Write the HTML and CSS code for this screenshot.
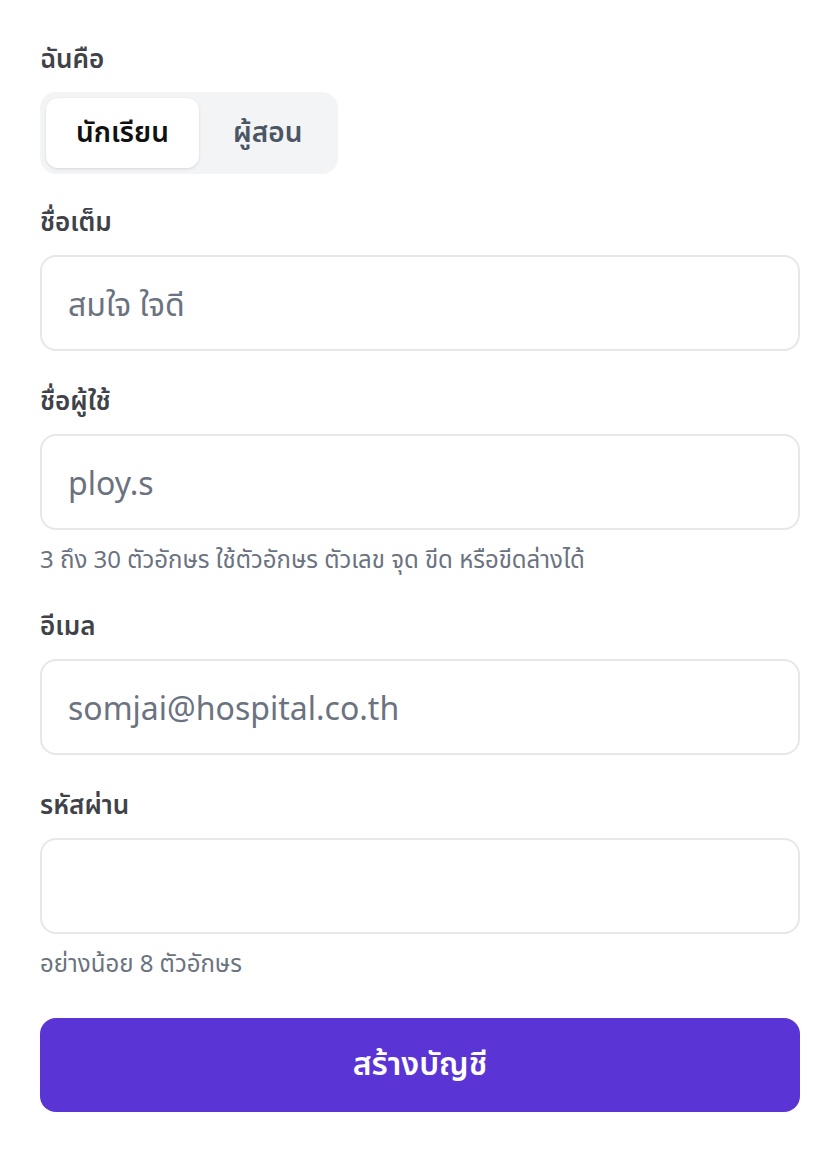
FILE: index.html
```html
<!DOCTYPE html>
<html lang="th">
<head>
<meta charset="utf-8">
<title>สร้างบัญชี</title>
<link rel="stylesheet" href="styles.css">
</head>
<body>
<form class="form">
  <div class="group group-role">
    <div class="label">ฉันคือ</div>
    <div class="segment">
      <button type="button" class="seg-tab active">นักเรียน</button>
      <button type="button" class="seg-tab">ผู้สอน</button>
    </div>
  </div>
  <div class="group">
    <label class="label" for="fullname">ชื่อเต็ม</label>
    <input class="input" id="fullname" type="text" placeholder="สมใจ ใจดี">
  </div>
  <div class="group">
    <label class="label" for="username">ชื่อผู้ใช้</label>
    <input class="input" id="username" type="text" placeholder="ploy.s">
    <div class="hint">3 ถึง 30 ตัวอักษร ใช้ตัวอักษร ตัวเลข จุด ขีด หรือขีดล่างได้</div>
  </div>
  <div class="group">
    <label class="label" for="email">อีเมล</label>
    <input class="input" id="email" type="email" placeholder="somjai@hospital.co.th">
  </div>
  <div class="group">
    <label class="label" for="password">รหัสผ่าน</label>
    <input class="input" id="password" type="password">
    <div class="hint">อย่างน้อย 8 ตัวอักษร</div>
  </div>
  <button type="button" class="submit">สร้างบัญชี</button>
</form>
</body>
</html>
```

FILE: styles.css
```css
* {
  box-sizing: border-box;
}

html, body {
  margin: 0;
  padding: 0;
  background: #ffffff;
}

body {
  font-family: "Noto Sans", "Noto Sans Thai", "Noto Sans Thai UI", sans-serif;
  color: #374151;
}

.form {
  display: flex;
  flex-direction: column;
  padding: 40px 40px 0 40px;
}

.group {
  display: flex;
  flex-direction: column;
  margin-top: 31px;
}

.group-role {
  margin-top: 0;
}

.group-role + .group {
  margin-top: 29px;
}

.label {
  display: block;
  font-size: 26px;
  line-height: 36px;
  font-weight: 600;
  color: #3f4248;
  margin-bottom: 16px;
}

.segment {
  display: flex;
  align-self: flex-start;
  gap: 4px;
  padding: 6px;
  background: #f3f4f6;
  border-radius: 16px;
}

.seg-tab {
  font-family: inherit;
  font-size: 28px;
  font-weight: 600;
  height: 70px;
  padding: 0 30px;
  border: none;
  border-radius: 12px;
  background: transparent;
  color: #4b5563;
}

.seg-tab.active {
  background: #ffffff;
  color: #111111;
  box-shadow: 0 1px 3px rgba(0, 0, 0, 0.12);
}

.input {
  display: block;
  width: 100%;
  height: 96px;
  padding: 0 26px;
  border: 2px solid #e5e7eb;
  border-radius: 16px;
  font-family: inherit;
  font-size: 32px;
  color: #111827;
  background: #ffffff;
  outline: none;
}

.input::placeholder {
  color: #6b7280;
}

.hint {
  font-size: 24px;
  line-height: 32px;
  color: #6b7280;
  margin-top: 13px;
  margin-bottom: 1px;
}

.submit {
  margin-top: 38px;
  height: 94px;
  width: 100%;
  border: none;
  border-radius: 16px;
  background: #5b34d6;
  color: #ffffff;
  font-family: inherit;
  font-size: 32px;
  font-weight: 600;
}
```
